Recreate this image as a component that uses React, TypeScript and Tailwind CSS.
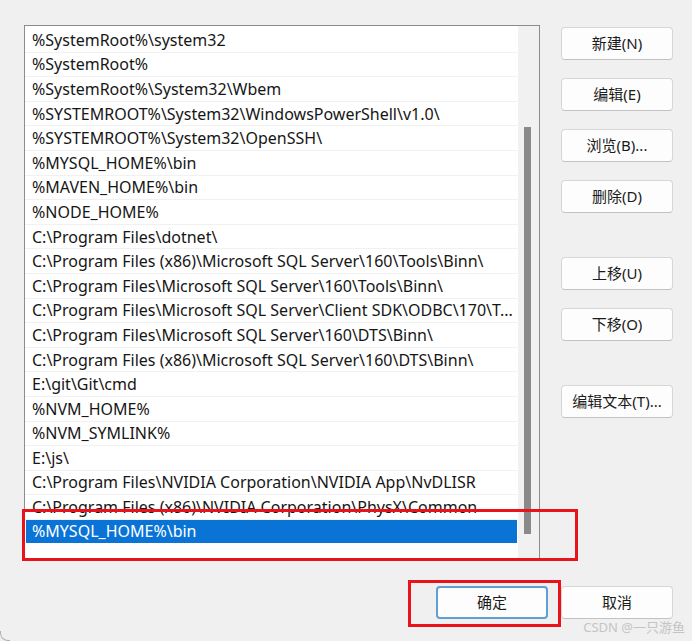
import React from "react";

const rows = [
  "%SystemRoot%\\system32",
  "%SystemRoot%",
  "%SystemRoot%\\System32\\Wbem",
  "%SYSTEMROOT%\\System32\\WindowsPowerShell\\v1.0\\",
  "%SYSTEMROOT%\\System32\\OpenSSH\\",
  "%MYSQL_HOME%\\bin",
  "%MAVEN_HOME%\\bin",
  "%NODE_HOME%",
  "C:\\Program Files\\dotnet\\",
  "C:\\Program Files (x86)\\Microsoft SQL Server\\160\\Tools\\Binn\\",
  "C:\\Program Files\\Microsoft SQL Server\\160\\Tools\\Binn\\",
  "C:\\Program Files\\Microsoft SQL Server\\Client SDK\\ODBC\\170\\T...",
  "C:\\Program Files\\Microsoft SQL Server\\160\\DTS\\Binn\\",
  "C:\\Program Files (x86)\\Microsoft SQL Server\\160\\DTS\\Binn\\",
  "E:\\git\\Git\\cmd",
  "%NVM_HOME%",
  "%NVM_SYMLINK%",
  "E:\\js\\",
  "C:\\Program Files\\NVIDIA Corporation\\NVIDIA App\\NvDLISR",
  "C:\\Program Files (x86)\\NVIDIA Corporation\\PhysX\\Common",
];

const font = { fontFamily: '"Noto Sans", "Noto Sans CJK SC", sans-serif' };

function Btn({ label, primary }: { label: string; primary?: boolean }) {
  return (
    <div
      className={
        "w-[112px] h-[33px] rounded-[4px] bg-[#fdfdfd] flex items-center justify-center text-[15px] text-[#1b1b1b] " +
        (primary
          ? "border-2 border-[#5f9fd3]"
          : "border border-[#d6d6d6] border-b-[#c2c2c2]")
      }
    >
      {label}
    </div>
  );
}

export default function App() {
  return (
    <div
      className="relative w-[692px] h-[641px] bg-[#f0f0f0] overflow-hidden"
      style={font}
    >
      <div className="flex pt-[25px] pl-[24px]">
        <div className="w-[516px] h-[534px] border border-[#8c8c8c] bg-white flex">
          <div className="flex-1 min-w-0 pt-[2px] flex flex-col">
            {rows.map((r, i) => (
              <div
                key={i}
                className="h-[24.6px] shrink-0 flex items-center pl-[7px] border-b border-[#f1f1f1] text-[16px] text-[#161616] whitespace-nowrap overflow-hidden"
              >
                {r}
              </div>
            ))}
            <div className="h-[23px] shrink-0 mx-[1px] flex items-center pl-[6px] bg-[#0a74d6] text-white text-[16px] whitespace-nowrap">
              %MYSQL_HOME%\bin
            </div>
          </div>
          <div className="w-[21px] shrink-0 bg-[#f1f1f1] pt-[101px] pl-[6px]">
            <div className="w-[7px] h-[407px] bg-[#8a8a8a]" />
          </div>
        </div>
        <div className="ml-[21px] pt-[2px] flex flex-col">
          <Btn label="新建(N)" />
          <div className="h-[18px]" />
          <Btn label="编辑(E)" />
          <div className="h-[18px]" />
          <Btn label="浏览(B)..." />
          <div className="h-[18px]" />
          <Btn label="删除(D)" />
          <div className="h-[44px]" />
          <Btn label="上移(U)" />
          <div className="h-[18px]" />
          <Btn label="下移(O)" />
          <div className="h-[44px]" />
          <Btn label="编辑文本(T)..." />
        </div>
      </div>
      <div className="flex justify-end gap-[13px] pr-[19px] mt-[27px]">
        <Btn label="确定" primary />
        <Btn label="取消" />
      </div>

      <div className="absolute left-[22px] top-[509px] w-[556px] h-[52px] border-[3px] border-[#e8131b]" />
      <div className="absolute left-[408px] top-[580px] w-[153px] h-[47px] border-[3px] border-[#e8131b]" />
      <div className="absolute right-[7px] bottom-[4px] text-[13px] text-[#c4c4c4]">
        CSDN @一只游鱼
      </div>
      <div className="absolute left-0 bottom-0 w-[10px] h-[10px] border-l border-b border-[#b0b0b0] rounded-bl-[8px]" />
    </div>
  );
}
